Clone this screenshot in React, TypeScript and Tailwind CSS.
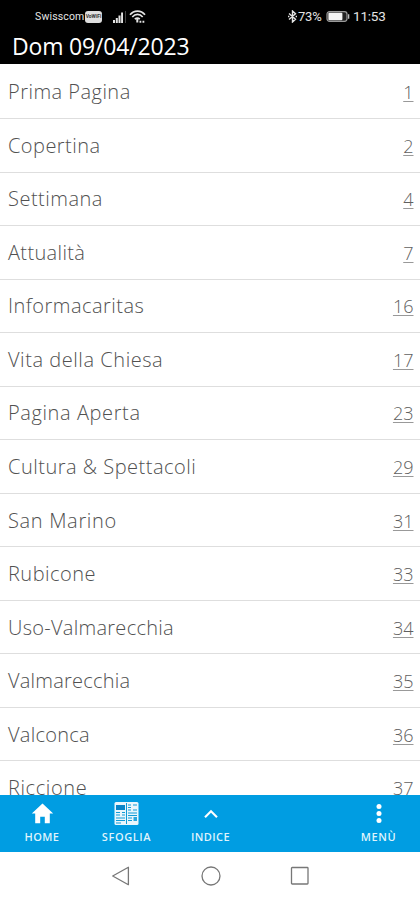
type Section = { title: string; page: number; tracking: string };

const sections: Section[] = [
  { title: "Prima Pagina", page: 1, tracking: "tracking-[0.47px]" },
  { title: "Copertina", page: 2, tracking: "tracking-[0.45px]" },
  { title: "Settimana", page: 4, tracking: "tracking-[0.5px]" },
  { title: "Attualità", page: 7, tracking: "tracking-[0.35px]" },
  { title: "Informacaritas", page: 16, tracking: "tracking-[0.48px]" },
  { title: "Vita della Chiesa", page: 17, tracking: "tracking-[0.55px]" },
  { title: "Pagina Aperta", page: 23, tracking: "tracking-[0.6px]" },
  { title: "Cultura & Spettacoli", page: 29, tracking: "tracking-[0.5px]" },
  { title: "San Marino", page: 31, tracking: "tracking-[0.67px]" },
  { title: "Rubicone", page: 33, tracking: "tracking-[0.47px]" },
  { title: "Uso-Valmarecchia", page: 34, tracking: "tracking-[0.28px]" },
  { title: "Valmarecchia", page: 35, tracking: "tracking-[0.22px]" },
  { title: "Valconca", page: 36, tracking: "tracking-[0.25px]" },
  { title: "Riccione", page: 37, tracking: "tracking-[0.6px]" },
];

function StatusBar() {
  return (
    <div className="flex h-[33px] items-center pr-[34px] pl-[35px] font-['Roboto',sans-serif] text-[#e4e4e4]">
      <span className="w-[50px] text-[10.5px] tracking-[0.15px] whitespace-nowrap">Swisscom</span>
      <span className="flex h-[12px] w-[17px] items-center justify-center overflow-hidden rounded-[3px] bg-[#dedede] text-[5px] font-bold text-[#333]">VoWiFi</span>
      <svg className="ml-[10px] h-[12px] w-[15px]" viewBox="0 0 15 12" fill="currentColor">
        <path d="M1 9h2v3H1zM3.8 7h2v5h-2zM6.5 4.5h2V12h-2zM9.1 1.5H11V12H9.1z" />
        <path d="M13 0h1v12h-1z" fill="#444" />
      </svg>
      <svg className="ml-[2px] h-[14px] w-[17px]" viewBox="0 0 17 14" fill="none" stroke="currentColor" strokeWidth="1.7">
        <path d="M1 4.8C5-.2 12-.2 16 4.8M3.3 7c3-3.4 7.4-3.4 10.4 0M5.8 9.2c1.8-1.6 3.4-1.6 5 0" />
        <path d="M8.3 9v3.5M10.5 11.8h1.8M13.5 11.8h1.8" strokeWidth="2" />
      </svg>
      <svg className="ml-auto h-[13px] w-[9px]" viewBox="0 0 9 13" fill="none" stroke="currentColor" strokeWidth="1.4">
        <path d="M1 3.5l6.5 5.8-3 2.7V1l3 2.7L1 9.5M0 6.5h1.4M7.6 6.5H9" />
      </svg>
      <span className="ml-[1px] w-[26px] text-[13px] tracking-[-0.2px]">73%</span>
      <svg className="ml-[2px] h-[11px] w-[24px]" viewBox="0 0 24 11">
        <rect x="1" y=".7" width="20" height="9.6" rx="2.5" fill="#222" stroke="#999" strokeWidth="1.2" />
        <rect x="2.4" y="1.8" width="14" height="7.4" rx="1" fill="#f3f3f3" />
        <path d="M22 3.3h1.3v4.4H22z" fill="#bbb" />
      </svg>
      <span className="ml-[3px] w-[33px] text-[13.5px] tracking-[-0.2px]">11:53</span>
    </div>
  );
}

function SectionRow({ title, page, tracking }: Section) {
  return (
    <li className="flex h-[53.54px] shrink-0 items-center justify-between border-b border-[#dedede] pt-px pr-[6.5px] pl-[8px] text-[20px] leading-[28px] font-light text-[#515151]">
      <span className={tracking}>{title}</span>
      <span className="text-[18px] text-[#606060] underline decoration-[#999] decoration-1 underline-offset-[2px]">{page}</span>
    </li>
  );
}

function BottomBar() {
  return (
    <nav className="flex h-[57px] shrink-0 bg-[#009de2] text-[11px] leading-[14px] font-semibold text-[#dff3fc]">
      <div className="flex w-[84px] flex-col items-center pt-[7px]">
        <svg className="h-[23px] w-[23px]" viewBox="0 0 23 23" fill="#fff">
          <path d="M11.5 1.5L.8 11.4h3.4v9.8h5v-6.4h4.6v6.4h5v-9.8h3.4z" />
        </svg>
        <span className="mt-[5px] tracking-[0.4px]">HOME</span>
      </div>
      <div className="flex w-[85px] flex-col items-center pt-[7px]">
        <svg className="h-[23px] w-[25px]" viewBox="0 0 25 23">
          <rect x=".5" width="24" height="23" rx="1.5" fill="#e9f6fc" />
          <path d="M2 3h9v5H2z" fill="#0785c9" />
          <path d="M12.5 1v21M2 10.5h4M8 10.5h3M2 13h4M8 13h3M2 16h9M2 18.5h9M2 21h5M14 3h3M19 3h4M14 5.5h3M14 8h3M19 8h4M14 11h9M14 13.5h9M14 16h4M14 18.5h4" fill="none" stroke="#119bd7" />
          <path d="M19.5 15h3.5v4h-3.5z" fill="#2aa6dd" />
        </svg>
        <span className="mt-[5px] tracking-[0.6px]">SFOGLIA</span>
      </div>
      <div className="flex w-[83px] flex-col items-center pt-[7px]">
        <svg className="h-[23px] w-[16px]" viewBox="0 0 16 23" fill="none" stroke="#fff" strokeWidth="2.1">
          <path d="M2 15.2l6-6 6 6" />
        </svg>
        <span className="mt-[5px] tracking-[0.4px]">INDICE</span>
      </div>
      <div className="ml-auto flex w-[83px] flex-col items-center pt-[7px]">
        <svg className="h-[23px] w-[8px]" viewBox="0 0 8 23" fill="#fff">
          <circle cx="4" cy="4.6" r="2.5" />
          <circle cx="4" cy="11.5" r="2.5" />
          <circle cx="4" cy="18.4" r="2.5" />
        </svg>
        <span className="mt-[5px] tracking-[0.6px]">MENÙ</span>
      </div>
    </nav>
  );
}

function SystemNavigation() {
  return (
    <div className="flex h-[48px] shrink-0 items-center justify-between bg-white pr-[110px] pl-[111px] text-[#777]">
      <svg className="h-[20px] w-[20px]" viewBox="0 0 20 20" fill="none" stroke="currentColor" strokeWidth="1.3" strokeLinejoin="round">
        <path d="M17.4 1.3v17.4L1.7 10z" />
      </svg>
      <svg className="h-[20px] w-[20px]" viewBox="0 0 20 20" fill="none" stroke="currentColor" strokeWidth="1.3">
        <circle cx="10" cy="10" r="9" />
      </svg>
      <svg className="h-[20px] w-[20px]" viewBox="0 0 20 20" fill="none" stroke="currentColor" strokeWidth="1.3">
        <rect x="1.5" y="1.5" width="16.5" height="16.5" rx=".7" />
      </svg>
    </div>
  );
}

export default function App() {
  return (
    <div className="flex h-[900px] w-[420px] flex-col overflow-hidden bg-white font-['Open_Sans',sans-serif]">
      <header className="h-[64px] shrink-0 bg-black">
        <StatusBar />
        <h1 className="-mt-px pl-[12px] text-[23px] leading-[28px] tracking-[-0.17px] text-white">Dom 09/04/2023</h1>
      </header>
      <ul className="flex h-[731px] shrink-0 flex-col overflow-hidden pt-[1.5px]">
        {sections.map((section) => (
          <SectionRow key={section.title} {...section} />
        ))}
      </ul>
      <BottomBar />
      <SystemNavigation />
    </div>
  );
}
